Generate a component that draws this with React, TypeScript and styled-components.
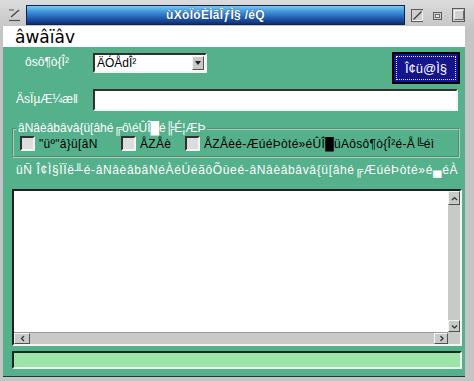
import React from 'react';
import styled, { createGlobalStyle } from 'styled-components';

const teal = '#55b08c';

const GlobalStyle = createGlobalStyle`
  html, body {
    margin: 0;
    padding: 0;
    background: #c6c6c6;
  }
  body {
    font-family: 'Liberation Sans', 'DejaVu Sans', sans-serif;
    font-size: 12px;
  }
`;

const Frame = styled.div`
  width: 474px;
  height: 381px;
  box-sizing: border-box;
  padding: 0 9px 4px 3px;
  background: linear-gradient(to bottom, #dcdcdc, #c4c4c4 30px, #c4c4c4);
  display: flex;
  flex-direction: column;
`;

const TitleArea = styled.div`
  height: 26px;
  display: flex;
  align-items: flex-start;
`;

const MenuIconCell = styled.div`
  width: 23px;
  height: 26px;
  display: flex;
  justify-content: center;
  padding-top: 8px;
  box-sizing: border-box;
`;

const TitleBar = styled.div`
  width: 379px;
  height: 20px;
  margin-top: 5px;
  box-sizing: border-box;
  border: 1px solid #0e2450;
  background: linear-gradient(to bottom, #7cc6f2 0%, #3a90d8 35%, #1f58ac 70%, #122c70 100%);
  color: #fff;
  font-weight: bold;
  font-size: 12px;
  display: flex;
  align-items: center;
  justify-content: center;
  text-shadow: 0 0 1px #0a2050;
  letter-spacing: 0.3px;
`;

const WinButton = styled.div<{ $left: number; $top: number }>`
  margin-left: ${(p) => p.$left}px;
  margin-top: ${(p) => p.$top}px;
  display: flex;
`;

const MenuBar = styled.div`
  height: 22px;
  background: #fff;
  display: flex;
  align-items: center;
  padding-left: 12px;
  font-family: 'DejaVu Sans', sans-serif;
  font-size: 17px;
  color: #000;
`;

const Body = styled.div`
  flex: 1;
  background: ${teal};
  padding: 5px 3px 7px 9px;
  display: flex;
  flex-direction: column;
  border-bottom: 1px solid #1e3a30;
`;

const Row = styled.div<{ $h: number; $mt?: number }>`
  display: flex;
  align-items: flex-start;
  height: ${(p) => p.$h}px;
  margin-top: ${(p) => p.$mt || 0}px;
`;

const FieldLabel = styled.div`
  width: 70px;
  margin-right: 11px;
  height: 20px;
  display: flex;
  align-items: center;
  justify-content: center;
  color: #fff;
  white-space: nowrap;
`;

const Sunken = styled.div`
  box-sizing: border-box;
  border-style: solid;
  border-width: 2px;
  border-color: #303030 #f4f4f4 #f4f4f4 #303030;
`;

const Combo = styled(Sunken)`
  width: 114px;
  height: 20px;
  margin-top: 1px;
  background: #fff;
  display: flex;
  align-items: center;
  padding-left: 2px;
  color: #000;
`;

const ComboText = styled.span`
  flex: 1;
`;

const Raised = styled.div`
  box-sizing: border-box;
  background: #c8cac8;
  border-style: solid;
  border-width: 1px;
  border-color: #f4f4f4 #505050 #505050 #f4f4f4;
  display: flex;
  align-items: center;
  justify-content: center;
`;

const ComboButton = styled(Raised)`
  width: 12px;
  height: 14px;
  margin-right: 1px;
`;

const Spacer = styled.div`
  flex: 1;
`;

const ActionButton = styled.div`
  width: 68px;
  height: 32px;
  margin-right: 2px;
  box-sizing: border-box;
  border: 2px solid #000;
  background: #14148e;
  padding: 2px;
  display: flex;
`;

const FocusRing = styled.div`
  flex: 1;
  border: 1px dotted #e8e8ff;
  display: flex;
  align-items: center;
  justify-content: center;
  color: #fff;
  font-size: 13px;
`;

const TextInput = styled(Sunken)`
  width: 365px;
  height: 22px;
  background: #fff;
`;

const GroupBox = styled.div`
  margin-top: 17px;
  margin-right: 2px;
  border: 2px groove #9ad8bc;
  padding: 0 6px 5px 6px;
`;

const Legend = styled.div`
  width: fit-content;
  margin: -8px 0 0 -4px;
  padding: 0 2px;
  height: 12px;
  line-height: 12px;
  background: ${teal};
  color: #fff;
  white-space: nowrap;
`;

const CheckRow = styled.div`
  display: flex;
  align-items: center;
  height: 15px;
  margin-top: 2px;
`;

const CheckItem = styled.div<{ $w?: number }>`
  display: flex;
  align-items: center;
  gap: 4px;
  width: ${(p) => (p.$w ? `${p.$w}px` : 'auto')};
  color: #000;
  white-space: nowrap;
  letter-spacing: 0.3px;
`;

const CheckBox = styled(Sunken)`
  width: 15px;
  height: 15px;
  background: #dcdcdc;
`;

const Caption = styled.div`
  margin-top: 5px;
  height: 14px;
  line-height: 14px;
  padding-left: 4px;
  color: #fff;
  white-space: nowrap;
  letter-spacing: 0.65px;
`;

const TextBox = styled(Sunken)`
  margin-top: 12px;
  height: 157px;
  display: grid;
  grid-template-columns: 1fr 12px;
  grid-template-rows: 1fr 12px;
  background: #fff;
  border-color: #202020 #f4f4f4 #f4f4f4 #202020;
`;

const VScroll = styled.div`
  display: flex;
  flex-direction: column;
  background: #c8cac8;
`;

const HScroll = styled.div`
  display: flex;
  background: #c8cac8;
  border-top: 1px solid #9a9a9a;
`;

const ScrollButton = styled(Raised)<{ $w: number; $h: number }>`
  width: ${(p) => p.$w}px;
  height: ${(p) => p.$h}px;
`;

const Corner = styled.div`
  background: #c8cac8;
`;

const StatusBar = styled(Sunken)`
  margin-top: 5px;
  height: 18px;
  background: #9ce4a8;
  border-color: #1a2a22 #e8f8ee #e8f8ee #1a2a22;
`;

const Chevron = ({ dir }: { dir: 'up' | 'down' | 'left' | 'right' }) => {
  const pts = {
    up: '1,4 3.5,1.5 6,4',
    down: '1,1.5 3.5,4 6,1.5',
    left: '4,1 1.5,3.5 4,6',
    right: '1.5,1 4,3.5 1.5,6',
  }[dir];
  const vert = dir === 'up' || dir === 'down';
  return (
    <svg width={vert ? 7 : 5} height={vert ? 5 : 7}>
      <polyline points={pts} fill="none" stroke="#303030" strokeWidth="1.2" />
    </svg>
  );
};

const App = () => {
  return (
    <>
      <GlobalStyle />
      <Frame>
        <TitleArea>
          <MenuIconCell>
            <svg width="13" height="14">
              <path d="M1 2h5" stroke="#555" strokeWidth="1" />
              <path d="M3 9l8-7" stroke="#444" strokeWidth="1.3" />
              <path d="M1 12.5h11" stroke="#555" strokeWidth="1.2" />
            </svg>
          </MenuIconCell>
          <TitleBar>ùXòÏóÈÌãÎƒÌ§ /éQ</TitleBar>
          <WinButton $left={6} $top={9}>
            <svg width="12" height="13">
              <rect x="0.5" y="0.5" width="11" height="12" fill="#d0d0d0" stroke="#5a5a5a" />
              <path d="M1.5 11.5h10v-10" stroke="#f4f4f4" fill="none" />
              <path d="M2.5 10.5l8-8" stroke="#3a3a3a" strokeWidth="1.2" />
            </svg>
          </WinButton>
          <WinButton $left={10} $top={12}>
            <svg width="9" height="8">
              <rect x="0.5" y="0.5" width="8" height="7" fill="#d0d0d0" stroke="#5a5a5a" />
              <rect x="2.5" y="2.5" width="4" height="3" fill="#eee" stroke="#6a6a6a" />
            </svg>
          </WinButton>
          <WinButton $left={10} $top={8}>
            <svg width="13" height="14">
              <rect x="0.5" y="0.5" width="12" height="13" fill="#d0d0d0" stroke="#5a5a5a" />
              <path d="M2.5 11.5v-9h9" stroke="#f4f4f4" fill="none" />
              <path d="M2.5 11.5h9v-9" stroke="#6a6a6a" fill="none" />
            </svg>
          </WinButton>
        </TitleArea>
        <MenuBar>âwâïâv</MenuBar>
        <Body>
          <Row $h={32}>
            <FieldLabel>ôsô¶ò{'{'}Î²</FieldLabel>
            <Combo>
              <ComboText>ÄÓÅdÎ²</ComboText>
              <ComboButton>
                <svg width="6" height="4">
                  <polygon points="0,0 6,0 3,4" fill="#202020" />
                </svg>
              </ComboButton>
            </Combo>
            <Spacer />
            <ActionButton>
              <FocusRing>Î¢ü@Ì§</FocusRing>
            </ActionButton>
          </Row>
          <Row $h={22} $mt={5}>
            <FieldLabel>ÄsÏµÆ¼æ‖</FieldLabel>
            <TextInput />
          </Row>
          <GroupBox>
            <Legend>âNâèâbâvâ{'{'}ü[âhé╔ô\éÛÎ█é╠É¦ÆÞ</Legend>
            <CheckRow>
              <CheckItem $w={101}>
                <CheckBox />
                "üº"â{'}'}ü[âN
              </CheckItem>
              <CheckItem $w={64}>
                <CheckBox />
                ÅZÅè
              </CheckItem>
              <CheckItem>
                <CheckBox />
                ÅZÅèé-ÆúéÞòté»éÛÎ█üAôsô¶ò{'{'}Î²é-Å╚éì
              </CheckItem>
            </CheckRow>
          </GroupBox>
          <Caption>üÑ Î¢Ì§ÏÏë╨é-âNâèâbâNéÀéÚéãôÕùeé-âNâèâbâvâ{'{'}ü[âhé╔ÆúéÞòté»é▄éÀ</Caption>
          <TextBox>
            <div />
            <VScroll>
              <ScrollButton $w={12} $h={14}>
                <Chevron dir="up" />
              </ScrollButton>
              <Spacer />
              <ScrollButton $w={12} $h={12}>
                <Chevron dir="down" />
              </ScrollButton>
            </VScroll>
            <HScroll>
              <ScrollButton $w={16} $h={11}>
                <Chevron dir="left" />
              </ScrollButton>
              <Spacer />
              <ScrollButton $w={14} $h={11}>
                <Chevron dir="right" />
              </ScrollButton>
            </HScroll>
            <Corner />
          </TextBox>
          <StatusBar />
        </Body>
      </Frame>
    </>
  );
};

export default App;
